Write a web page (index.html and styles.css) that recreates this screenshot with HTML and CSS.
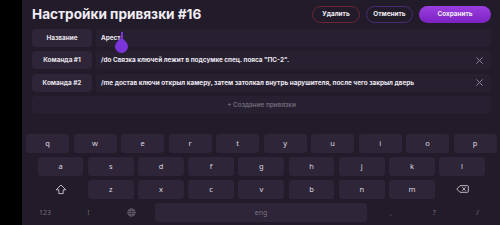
FILE: index.html
```html
<!DOCTYPE html>
<html lang="ru">
<head>
<meta charset="utf-8">
<link rel="stylesheet" href="styles.css">
</head>
<body>
<div class="screen">
  <div class="side"></div>
  <div class="main">
    <div class="content">
      <header class="header">
        <h1 class="title">Настройки привязки #16</h1>
        <div class="actions">
          <button class="btn btn-delete">Удалить</button>
          <button class="btn btn-cancel">Отменить</button>
          <button class="btn btn-save">Сохранить</button>
        </div>
      </header>
      <div class="rows">
        <div class="row">
          <div class="label">Название</div>
          <div class="field"><span class="value">Арест<span class="caret"><span class="drop"></span></span></span></div>
        </div>
        <div class="row">
          <div class="label">Команда #1</div>
          <div class="field"><span class="value">/do Связка ключей лежит в подсумке спец. пояса "ПС-2".</span>
            <svg class="close" viewBox="0 0 10 10"><path d="M1.5 1.5L8.5 8.5M8.5 1.5L1.5 8.5"/></svg>
          </div>
        </div>
        <div class="row">
          <div class="label">Команда #2</div>
          <div class="field"><span class="value">/me достав ключи открыл камеру, затем затолкал внутрь нарушителя, после чего закрыл дверь</span>
            <svg class="close" viewBox="0 0 10 10"><path d="M1.5 1.5L8.5 8.5M8.5 1.5L1.5 8.5"/></svg>
          </div>
        </div>
        <div class="row">
          <div class="create">+ Создание привязки</div>
        </div>
      </div>
    </div>
    <div class="keyboard">
      <div class="krow krow1">
        <div class="key">q</div><div class="key">w</div><div class="key">e</div><div class="key">r</div><div class="key">t</div>
        <div class="key">y</div><div class="key">u</div><div class="key">i</div><div class="key">o</div><div class="key">p</div>
      </div>
      <div class="krow krow2">
        <div class="key">a</div><div class="key">s</div><div class="key">d</div><div class="key">f</div><div class="key">g</div>
        <div class="key">h</div><div class="key">j</div><div class="key">k</div><div class="key">l</div>
      </div>
      <div class="krow krow2">
        <div class="key key-plain">
          <svg class="ico-shift" viewBox="0 0 12 11"><path d="M6 1L1.2 5.8H3.8V9.6H8.2V5.8H10.8Z"/></svg>
        </div>
        <div class="key">z</div><div class="key">x</div><div class="key">c</div><div class="key">v</div>
        <div class="key">b</div><div class="key">n</div><div class="key">m</div>
        <div class="key key-plain">
          <svg class="ico-back" viewBox="0 0 13 8"><path d="M4 0.7H11.6Q12.3 0.7 12.3 1.4V6.6Q12.3 7.3 11.6 7.3H4L0.8 4Z"/><path class="x" d="M6.3 2.3L9.5 5.7M9.5 2.3L6.3 5.7"/></svg>
        </div>
      </div>
      <div class="krow krow4">
        <div class="key key-plain key-dim">123</div>
        <div class="key key-plain key-dim">!</div>
        <div class="key key-plain">
          <svg class="ico-globe" viewBox="0 0 10 10"><circle cx="5" cy="5" r="4.2"/><ellipse cx="5" cy="5" rx="1.9" ry="4.2"/><path d="M0.8 5H9.2M1.5 2.8H8.5M1.5 7.2H8.5"/></svg>
        </div>
        <div class="key key-space">eng</div>
        <div class="key key-plain key-dim">,</div>
        <div class="key key-plain key-dim">?</div>
        <div class="key key-plain key-dim">/</div>
      </div>
    </div>
  </div>
</div>
</body>
</html>
```

FILE: styles.css
```css
* { box-sizing: border-box; }
html, body { margin: 0; padding: 0; }
body {
  width: 500px;
  height: 225px;
  overflow: hidden;
  background: #000;
  font-family: Inter, "Noto Sans", sans-serif;
  color: #ebe7ef;
}
.screen {
  display: flex;
  width: 500px;
  height: 225px;
}
.side {
  width: 22px;
  flex: none;
  background: #000;
}
.main {
  flex: 1;
  display: flex;
  flex-direction: column;
  background: #221b2a;
}
.content {
  padding: 6px 9px 0 10px;
}
.header {
  display: flex;
  align-items: center;
  justify-content: space-between;
  height: 17px;
  margin-bottom: 6px;
}
.title {
  margin: 0;
  font-size: 13.6px;
  font-weight: 700;
  line-height: 17px;
  color: #f1edf5;
  letter-spacing: 0;
}
.actions {
  display: flex;
  gap: 6px;
}
.btn {
  height: 17px;
  border-radius: 9px;
  font-family: inherit;
  font-size: 6.4px;
  font-weight: 700;
  color: #f1edf5;
  background: transparent;
  padding: 0;
  line-height: 15px;
  cursor: pointer;
}
.btn-delete { width: 48px; border: 1px solid #6e2532; }
.btn-cancel { width: 47px; border: 1px solid #4a2c77; }
.btn-save {
  width: 72px;
  border: none;
  line-height: 17px;
  background: linear-gradient(180deg, #9a3ee0 0%, #7d22c2 100%);
}
.rows {
  display: flex;
  flex-direction: column;
  gap: 4.33px;
}
.row {
  display: flex;
  gap: 4px;
  height: 18px;
}
.label {
  width: 60px;
  flex: none;
  border-radius: 4px;
  background: #2e2638;
  display: flex;
  align-items: center;
  justify-content: center;
  font-size: 6.4px;
  font-weight: 700;
  color: #e6e2ea;
}
.field {
  flex: 1;
  border-radius: 4px;
  background: #272030;
  display: flex;
  align-items: center;
  justify-content: space-between;
  padding: 0 7px 0 5px;
  font-size: 6.4px;
  font-weight: 700;
  color: #ebe7ef;
}
.value {
  position: relative;
  white-space: nowrap;
}
.caret {
  position: absolute;
  left: 100%;
  top: -2px;
  margin-left: 0.5px;
  width: 1.5px;
  height: 12px;
  background: #7b34d8;
}
.drop {
  position: absolute;
  left: -5.8px;
  top: 7.5px;
  width: 13px;
  height: 13px;
  background: #7b34d8;
  border-radius: 50% 0 50% 50%;
  transform: rotate(-45deg);
}
.close {
  width: 9px;
  height: 9px;
  fill: none;
  stroke: #8c8696;
  stroke-width: 1.1;
}
.create {
  flex: 1;
  border-radius: 4px;
  background: #272030;
  display: flex;
  align-items: center;
  justify-content: center;
  font-size: 6.4px;
  font-weight: 600;
  color: #6f6879;
}
.keyboard {
  flex: 1;
  display: flex;
  flex-direction: column;
  gap: 4.7px;
  padding-top: 20.3px;
}
.krow {
  display: grid;
  height: 18.3px;
  flex: none;
}
.krow1 {
  grid-template-columns: repeat(10, 1fr);
  gap: 4.4px;
  padding: 0 3.3px 0 4px;
}
.krow2 {
  grid-template-columns: repeat(9, 1fr);
  gap: 4.4px;
  padding: 0 15px 0 15.7px;
}
.krow4 {
  grid-template-columns: 43.3px 43.3px 43.3px 1fr 43.3px 43.3px 43.3px;
  padding: 0 0.8px 0 1.4px;
}
.key {
  border-radius: 3px;
  background: #2e2638;
  display: flex;
  align-items: center;
  justify-content: center;
  font-family: "Noto Sans", Roboto, sans-serif;
  font-size: 7.5px;
  color: #dcd8e0;
}
.key-plain { background: transparent; }
.key-dim { color: #77717f; font-size: 7px; }
.key-space {
  margin: 0 2.6px 0 2px;
  color: #77717f;
  font-size: 7px;
}
.ico-shift {
  width: 12px;
  height: 11px;
  fill: none;
  stroke: #cfcbd4;
  stroke-width: 0.9;
  stroke-linejoin: round;
}
.ico-back {
  width: 13px;
  height: 8px;
  fill: none;
  stroke: #cfcbd4;
  stroke-width: 0.9;
  stroke-linejoin: round;
}
.ico-globe {
  width: 9px;
  height: 9px;
  fill: none;
  stroke: #77717f;
  stroke-width: 0.7;
}
```
